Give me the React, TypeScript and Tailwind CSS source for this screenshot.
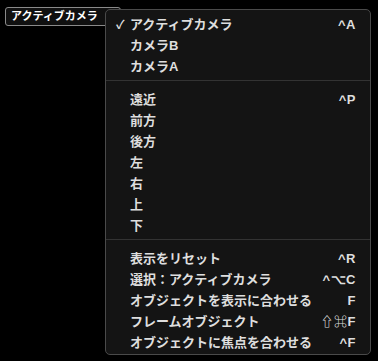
import React from "react";

type Item = { label: string; shortcut?: string; checked?: boolean };

const groups: Item[][] = [
  [
    { label: "アクティブカメラ", shortcut: "^A", checked: true },
    { label: "カメラB" },
    { label: "カメラA" },
  ],
  [
    { label: "遠近", shortcut: "^P" },
    { label: "前方" },
    { label: "後方" },
    { label: "左" },
    { label: "右" },
    { label: "上" },
    { label: "下" },
  ],
  [
    { label: "表示をリセット", shortcut: "^R" },
    { label: "選択：アクティブカメラ", shortcut: "^⌥C" },
    { label: "オブジェクトを表示に合わせる", shortcut: "F" },
    { label: "フレームオブジェクト", shortcut: "⇧⌘F" },
    { label: "オブジェクトに焦点を合わせる", shortcut: "^F" },
  ],
];

const font = {
  fontFamily: '"Liberation Sans", "Noto Sans CJK JP", sans-serif',
};

function Row({ item }: { item: Item }) {
  return (
    <div className="flex h-[21px] items-center pl-[10px] pr-[14px] text-[13px] font-bold leading-none text-[#dedede]">
      <span className="w-[14px] text-[12px]">{item.checked ? "✓" : ""}</span>
      <span className="flex-1">{item.label}</span>
      {item.shortcut && <span className="tracking-[0.5px]">{item.shortcut}</span>}
    </div>
  );
}

export default function App() {
  return (
    <div className="relative h-[361px] w-[378px] overflow-hidden bg-black" style={font}>
      <div className="pl-[5px] pt-[7px]">
        <button className="flex h-[19px] w-[116px] items-center rounded-[3px] border border-[#8a8a8a] bg-[#101010] pl-[5px] text-[11px] font-bold leading-none text-white">
          アクティブカメラ
        </button>
      </div>

      {/* dropdown menu */}
      <div className="absolute left-[105px] top-[9px] w-[266px] rounded-[5px] border border-[#4a4a4a] bg-[#141414] pt-[4px] pb-[1px]">
        {groups.map((g, gi) => (
          <div key={gi}>
            {gi > 0 && <div className="mb-[8px] mt-[3px] h-px bg-[#333333]" />}
            {g.map((item) => (
              <Row key={item.label} item={item} />
            ))}
          </div>
        ))}
      </div>
    </div>
  );
}
